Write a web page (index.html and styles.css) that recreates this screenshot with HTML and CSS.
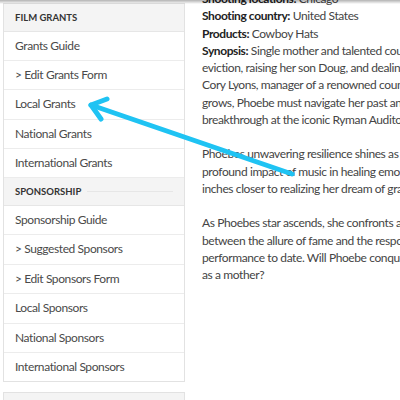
FILE: index.html
```html
<!DOCTYPE html>
<html>
<head>
<meta charset="utf-8">
<link rel="stylesheet" href="styles.css">
</head>
<body>
<div class="page">
  <aside class="sidebar">
    <nav class="menu">
      <div class="menu-head">FILM GRANTS</div>
      <div class="menu-item">Grants Guide</div>
      <div class="menu-item">&gt; Edit Grants Form</div>
      <div class="menu-item">Local Grants</div>
      <div class="menu-item">National Grants</div>
      <div class="menu-item">International Grants</div>
      <div class="menu-head"><span>SPONSORSHIP</span><span class="rule"></span></div>
      <div class="menu-item">Sponsorship Guide</div>
      <div class="menu-item">&gt; Suggested Sponsors</div>
      <div class="menu-item">&gt; Edit Sponsors Form</div>
      <div class="menu-item">Local Sponsors</div>
      <div class="menu-item">National Sponsors</div>
      <div class="menu-item last">International Sponsors</div>
    </nav>
    <div class="menu next"></div>
  </aside>
  <main class="content">
    <p><b>Shooting locations:</b> Chicago<br>
    <b>Shooting country:</b> United States<br>
    <b>Products:</b> Cowboy Hats<br>
    <b>Synopsis:</b> Single mother and talented country singer Phoebe faces<br>
    eviction, raising her son Doug, and dealing with an unreliable ex. When<br>
    Cory Lyons, manager of a renowned country band, discovers her, and her fame<br>
    grows, Phoebe must navigate her past and present to secure her big<br>
    breakthrough at the iconic Ryman Auditorium.</p>
    <p>Phoebes unwavering resilience shines as she confronts hardship, showing the<br>
    profound impact of music in healing emotional wounds. Step by step, she<br>
    inches closer to realizing her dream of grand stardom.</p>
    <p>As Phoebes star ascends, she confronts a pivotal decision, torn<br>
    between the allure of fame and the responsibilities of her family, before the biggest<br>
    performance to date. Will Phoebe conquer the stage and her doubts<br>
    as a mother?</p>
  </main>
</div>
<div class="top-shadow"></div>
<svg class="arrow" width="400" height="400" viewBox="0 0 400 400">
  <g fill="none" stroke="#1fc3f3" stroke-width="5" stroke-linecap="round" stroke-linejoin="round">
    <line x1="292" y1="174" x2="91" y2="105"/>
    <polyline points="107,99 91,105 101,119"/>
  </g>
</svg>
</body>
</html>
```
FILE: styles.css
```css
html, body {
  margin: 0;
  padding: 0;
  background: #fff;
  overflow: hidden;
  width: 400px;
  height: 400px;
}
body {
  font-family: "Lato", "Open Sans", sans-serif;
  color: #444;
}
.page {
  display: flex;
  align-items: flex-start;
  gap: 17px;
  padding-left: 3px;
  width: 800px;
}
.sidebar {
  width: 182px;
  flex: none;
  padding-top: 3px;
  display: flex;
  flex-direction: column;
  gap: 10px;
}
.menu {
  border: 1px solid #e2e2e2;
  background: #fff;
}
.menu-head {
  display: flex;
  align-items: center;
  gap: 6px;
  height: 26.5px;
  padding: 0 11px 0 11px;
  background: #f4f4f4;
  border-bottom: 1px solid #e6e6e6;
  font-size: 9.5px;
  font-weight: 700;
  color: #333;
}
.menu-head .rule {
  flex: 1;
  height: 1px;
  background: #e6e6e6;
}
.menu-item {
  height: 28.4px;
  line-height: 28.4px;
  padding-left: 11px;
  border-bottom: 1px solid #ececec;
  font-size: 12px;
  letter-spacing: -0.4px;
  color: #4a4a4a;
  white-space: nowrap;
}
.menu-item.last {
  border-bottom: none;
}
.menu.next {
  height: 30px;
  background: #f4f4f4;
}
.content {
  margin-top: -10px;
  font-size: 12px;
  letter-spacing: -0.4px;
  line-height: 17.25px;
  color: #444;
  white-space: nowrap;
}
.content p {
  margin: 0 0 17.25px 0;
}
.content b {
  color: #222;
  font-weight: 700;
}
.top-shadow {
  position: fixed;
  left: 0;
  top: 0;
  width: 400px;
  height: 4px;
  background: linear-gradient(to bottom, rgba(0,0,0,0.3), rgba(0,0,0,0));
}
.arrow {
  position: fixed;
  left: 0;
  top: 0;
  pointer-events: none;
}
```
